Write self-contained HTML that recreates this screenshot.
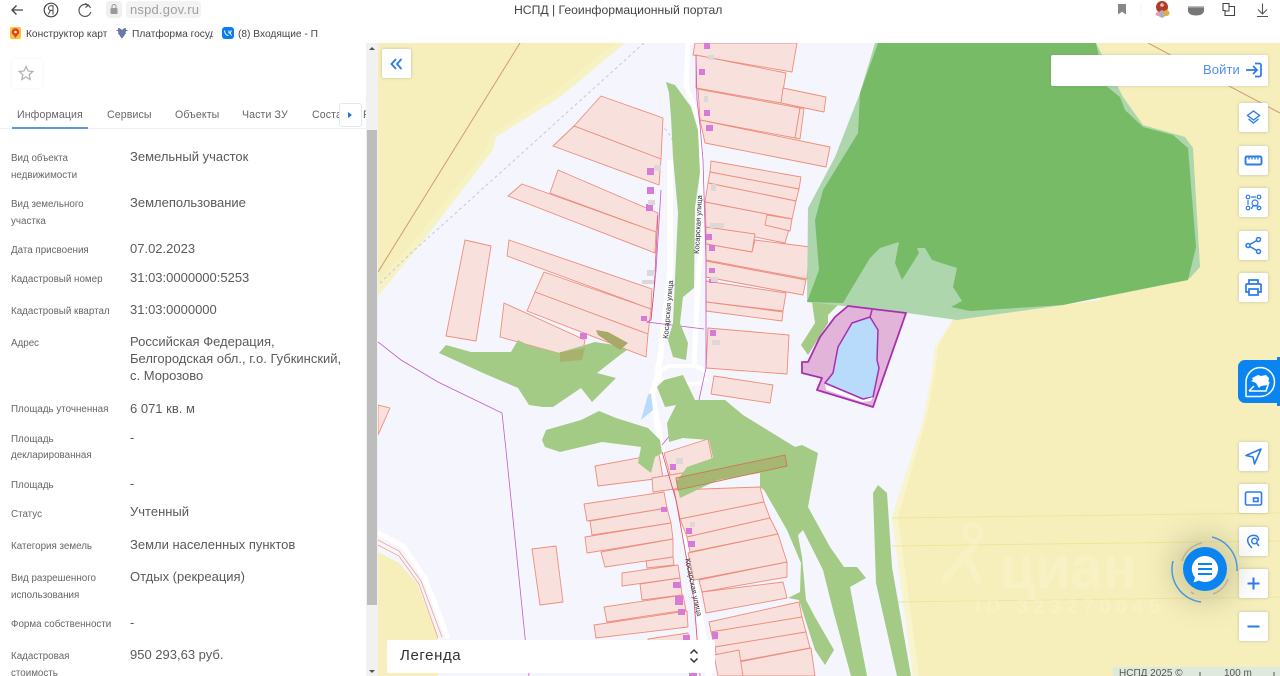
<!DOCTYPE html>
<html lang="ru"><head><meta charset="utf-8"><title>НСПД | Геоинформационный портал</title>
<style>
html,body{margin:0;padding:0;width:1280px;height:676px;overflow:hidden;background:#fff}
body{font-family:"Liberation Sans","Noto Sans CJK SC",sans-serif;position:relative}
#r{position:absolute;left:0;top:0;width:1280px;height:676px;overflow:hidden;filter:blur(.35px)}
.a{position:absolute;white-space:nowrap}
.l{position:absolute;left:11px;margin-top:2px;font-size:9.800px;line-height:12px;color:#666;white-space:nowrap}
.v{position:absolute;left:130px;margin-top:1px;font-size:13px;line-height:16px;color:#5a5a5a;white-space:nowrap;letter-spacing:0}
.t{position:absolute;top:108px;font-size:10.600px;line-height:14px;color:#666;white-space:nowrap;letter-spacing:.1px}
.b{position:absolute;left:1239px;width:29px;height:29px;background:#fff;border-radius:2px;box-shadow:0 0 3px rgba(90,110,130,.35)}
.b svg{position:absolute;left:5px;top:5px}
.bm{position:absolute;top:28px;font-size:10.200px;line-height:13px;color:#444;white-space:nowrap;overflow:hidden}
</style></head><body><div id="r">

<!-- browser chrome -->
<svg class="a" style="left:0;top:0" width="1280" height="43" fill="none">
<path d="M23 10H12M16.500 5.500L12 10l4.500 4.500" stroke="#444" stroke-width="1.300"/>
<circle cx="51" cy="10" r="6.800" stroke="#444" stroke-width="1.200"/>
<path d="M53 14.500V5.800h-2c-1.500 0-2.500 1-2.500 2.300s1 2.300 2.500 2.300h2M50.500 10.400l-2.200 4" stroke="#444" stroke-width="1"/>
<path d="M90.500 8a6 6 0 1 0 .3 4" stroke="#555" stroke-width="1.200"/><path d="M85 3.500l3.500 1.500L85.500 7.500" stroke="#555" stroke-width="1.200"/>
<rect x="106" y="1" width="16" height="17" rx="4" fill="#f0f0f0"/><rect x="110.500" y="8" width="7" height="6" rx="1" fill="#999"/><path d="M112 8V6.500a2 2 0 0 1 4 0V8" stroke="#999"/>
<rect x="126" y="1" width="75" height="17" rx="4" fill="#f3f3f3"/>
<path d="M1118 4h8v10.500l-4-2.800-4 2.800z" fill="#888"/>
<line x1="1141" y1="4" x2="1141" y2="16" stroke="#f4f4f4"/>
<circle cx="1162" cy="7" r="6" fill="#b23a2a"/><circle cx="1162" cy="5" r="1.800" fill="#e8c8a0"/><path d="M1155 14l7-4 7 4-7 4z" fill="#b4a8c8"/><circle cx="1166.500" cy="13" r="3" fill="#d8b040"/><circle cx="1158" cy="14" r="2" fill="#e0a0b0"/>
<path d="M1188 7.500h16v3c0 3-3 5-8 5s-8-2-8-5z" fill="#777"/><path d="M1188 6h16v1.500h-16z" fill="#bbb"/>
<path d="M1223 3.500h6v3h5.500v9H1225v-5h-2z" stroke="#444" stroke-width="1.100"/><path d="M1229 6.500v4.500h-4" stroke="#444"/>
<path d="M1262.500 3.500v10M1258 9.500l4.500 4.500 4.500-4.500M1257 16.500h11" stroke="#555" stroke-width="1.100"/>
<rect x="10" y="27" width="11" height="12" rx="2" fill="#f8c52c"/><circle cx="15.500" cy="32" r="3.800" fill="#e8392a"/><path d="M13 34l2.500 4 2.500-4z" fill="#e8392a"/><circle cx="15.500" cy="32" r="1.300" fill="#fff"/>
<path d="M118 28c2 0 3 1 4 2 1-1 2-2 4-2v1c0 3-.5 6-4 9.500-3.500-3.500-4-6.500-4-9.500z" fill="#6a78a8"/><path d="M116.500 30.500h2M125.500 30.500h2M118 33.500h1.500M124.500 33.500h1.500" stroke="#6a78a8"/>
<rect x="222" y="27" width="12" height="12" rx="3" fill="#0c7cf0"/><path d="M224.500 30.500c.3 3 1.500 5 4 5M229 30.500v2.500c1.200 0 2-1 2.300-2.500M229 33c1.200 0 2 1 2.500 2.500" stroke="#fff" stroke-width="1"/>
</svg>
<div class="a" style="left:130px;top:2px;font-size:13px;line-height:16px;color:#a0a0a0;letter-spacing:.2px">nspd.gov.ru</div>
<div class="a" style="left:514px;top:3px;font-size:12.200px;line-height:15px;color:#444">НСПД | Геоинформационный портал</div>
<div class="bm" style="left:26px;width:81px">Конструктор карт</div>
<div class="bm" style="left:132px;width:81px">Платформа госуд</div>
<div class="bm" style="left:238px;width:80px">(8) Входящие - По</div>

<!-- left panel -->
<div class="a" style="left:12px;top:59px;width:30px;height:29px;background:#fff;border-radius:3px;box-shadow:0 0 4px rgba(0,0,0,.06)"></div>
<svg class="a" style="left:18px;top:65px" width="16" height="16" fill="none"><path d="M8 1.500l2 4.500 4.800.5-3.600 3.200 1 4.800L8 12l-4.200 2.500 1-4.800L1.200 6.500 6 6z" stroke="#b0b0b0" stroke-width="1.200"/></svg>
<div class="t" style="left:17px">Информация</div>
<div class="t" style="left:107px">Сервисы</div>
<div class="t" style="left:175px">Объекты</div>
<div class="t" style="left:242px">Части ЗУ</div>
<div class="t" style="left:312px;width:28px;overflow:hidden">Состав</div>
<div class="t" style="left:363px;width:3px;overflow:hidden">Р</div>
<div class="a" style="left:0;top:128px;width:366px;height:1px;background:#f0f0f0"></div>
<div class="a" style="left:12px;top:127px;width:76px;height:2px;background:#5a9ad8"></div>
<div class="a" style="left:339px;top:103px;width:23px;height:24px;background:#fff;border:1px solid #e0e8f4;box-sizing:border-box;border-radius:3px"></div>
<svg class="a" style="left:347px;top:111px" width="6" height="8"><path d="M1 1l4 3-4 3z" fill="#1f74d8"/></svg>

<div class="l" style="top:151px">Вид объекта</div><div class="l" style="top:168px">недвижимости</div>
<div class="l" style="top:197px">Вид земельного</div><div class="l" style="top:214px">участка</div>
<div class="l" style="top:243px">Дата присвоения</div>
<div class="l" style="top:272px">Кадастровый номер</div>
<div class="l" style="top:304px">Кадастровый квартал</div>
<div class="l" style="top:336px">Адрес</div>
<div class="l" style="top:402px">Площадь уточненная</div>
<div class="l" style="top:432px">Площадь</div><div class="l" style="top:448px">декларированная</div>
<div class="l" style="top:478px">Площадь</div>
<div class="l" style="top:507px">Статус</div>
<div class="l" style="top:539px">Категория земель</div>
<div class="l" style="top:571px">Вид разрешенного</div><div class="l" style="top:588px">использования</div>
<div class="l" style="top:617px">Форма собственности</div>
<div class="l" style="top:649px">Кадастровая</div><div class="l" style="top:666px">стоимость</div>

<div class="v" style="top:148px">Земельный участок</div>
<div class="v" style="top:194px">Землепользование</div>
<div class="v" style="top:240px">07.02.2023</div>
<div class="v" style="top:269px">31:03:0000000:5253</div>
<div class="v" style="top:301px">31:03:0000000</div>
<div class="v" style="top:333px">Российская Федерация,</div>
<div class="v" style="top:350px">Белгородская обл., г.о. Губкинский,</div>
<div class="v" style="top:367px">с. Морозово</div>
<div class="v" style="top:400px">6 071 кв. м</div>
<div class="v" style="top:429px">-</div>
<div class="v" style="top:475px">-</div>
<div class="v" style="top:503px">Учтенный</div>
<div class="v" style="top:536px">Земли населенных пунктов</div>
<div class="v" style="top:568px">Отдых (рекреация)</div>
<div class="v" style="top:614px">-</div>
<div class="v" style="top:646px">950 293,63 руб.</div>

<!-- scrollbar -->
<div class="a" style="left:366px;top:43px;width:12px;height:633px;background:#f1f1f1"></div>
<div class="a" style="left:367px;top:130px;width:10px;height:475px;background:#bdbdbd"></div>
<svg class="a" style="left:366px;top:43px" width="12" height="633"><path d="M3 7l3-3 3 3z" fill="#555"/><path d="M3 627l3 3 3-3z" fill="#555"/></svg>

<!-- map -->
<svg class="a" style="left:378px;top:43px" width="902" height="633" viewBox="378 43 902 633">
<rect x="378" y="43" width="902" height="633" fill="#f5f5fd"/>
<polygon points="378,43 625,43 560,97 496,137 493,150 420,245 378,296" fill="#f7f2c4"/>
<polygon points="378,43 615,43 555,92 490,135 487,148 411,245 378,282" fill="#f6efbb"/>
<polygon points="1090,43 1280,43 1280,676 913,676 892,517 923,420 932,373 935,347 953,320 1100,300" fill="#f6efbb"/>
<polygon points="953,320 938,347 935,373 926,420 898,517 919,676 913,676 892,517 923,420 932,373 935,347" fill="#f8f4cc"/>
<path d="M378 552l21 11 18 20 21 55v38h-60z" fill="#f6efbb"/>
<path d="M378 533l25 13 22 32 23 60" fill="none" stroke="#fff" stroke-width="5"/>
<path d="M378 540l21 11 22 30 21 56M378 545l21 11 20 28 19 54" fill="none" stroke="#efa48f" stroke-width=".8"/>
<g stroke="#f0e49c" stroke-width="1" fill="none"><path d="M892 518L1280 513M892 546L1280 541M892 602L1280 597"/></g>
<path d="M520 43L378 272" stroke="#cf9a7c" stroke-width="1" fill="none"/>
<path d="M1148 43L1280 113" stroke="#cf9a7c" stroke-width="1" fill="none"/>
<path d="M644 43L448 220 411 253 378 285" stroke="#c4c8d4" stroke-width="1" stroke-dasharray="3 3" fill="none"/>
<path d="M590 111q50-2 75 18 8 8 10 20" stroke="#c4c8d4" stroke-width="1" stroke-dasharray="3 3" fill="none"/>
<!-- roads -->
<g fill="none" stroke="#fff" stroke-linejoin="round">
<path d="M688 43L686 85 700 125 703 210 697 300 694 365" stroke-width="5"/>
<path d="M670 160L670 273 660 360 657 372" stroke-width="6"/>
<path d="M659 372L652 393 662 450 680 500 704 640 709 676" stroke-width="6"/>
<path d="M660 371L668 366H695L706 371V378L698 384H668L660 378Z" stroke-width="4"/>
</g>
<polygon points="651,393 648,395 641,420 653,410" fill="#b8dbfb"/>
<!-- lots -->
<g fill="#f8e1dd" stroke="#ef8d7d" stroke-width=".9" stroke-linejoin="round">
<polygon points="601,96 663,118 661,159 574,126"/><polygon points="574,126 661,159 659,185 553,146"/>
<polygon points="558,170 658,213 656,232 550,193"/><polygon points="522,184 656,232 655,253 508,196"/>
<polygon points="465,240 491,246 476,341 446,336"/><polygon points="509,240 652,289 651,309 507,256"/>
<polygon points="544,272 651,309 648,334 535,292"/><polygon points="535,292 648,334 646,357 527,311"/>
<polygon points="504,303 585,340 581,360 558,353 500,337"/>
<polygon points="695,43 797,43 792,72 693,55"/><polygon points="696,55 786,73 781,103 696,88"/>
<polygon points="783,88 826,97 824,112 781,103"/><polygon points="698,89 800,108 795,138 700,120"/>
<polygon points="800,108 804,109 800,139 795,138"/><polygon points="700,120 830,147 826,167 705,143"/>
<polygon points="711,161 801,177 799,189 710,172"/><polygon points="710,172 799,189 796,201 708,183"/>
<polygon points="708,183 796,201 792,219 705,202"/><polygon points="705,202 792,219 785,243 706,227"/>
<polygon points="767,215 792,219 790,231 765,225"/><polygon points="706,227 755,234 752,252 706,244"/>
<polygon points="755,240 810,247 807,279 706,260 706,244 752,252"/><polygon points="706,261 806,280 803,295 706,277"/>
<polygon points="706,281 786,293 783,311 706,302"/><polygon points="706,302 783,312 782,321 706,311"/>
<polygon points="708,328 789,335 787,374 706,368"/><polygon points="714,376 773,385 770,403 711,394"/>
<polygon points="595,466 659,454 663,478 598,486"/><polygon points="664,453 708,439 714,468 671,478"/>
<polygon points="652,478 700,470 702,485 653,492"/>
<polygon points="584,504 664,492 667,508 587,521"/><polygon points="590,521 667,508 671,523 592,535"/>
<polygon points="585,537 671,523 673,539 587,553"/><polygon points="601,552 673,539 673,557 605,567"/>
<polygon points="646,561 673,557 674,565 647,568"/><polygon points="622,573 678,565 680,578 622,586"/>
<polygon points="640,584 680,578 682,595 642,600"/><polygon points="604,607 683,595 686,610 607,622"/>
<polygon points="594,625 687,611 688,627 596,638"/><polygon points="648,639 688,633 691,660 650,660"/>
<polygon points="674,490 760,487 764,502 680,519"/><polygon points="680,519 764,502 770,518 687,537"/>
<polygon points="687,537 770,518 778,534 690,552"/><polygon points="688,553 778,534 787,562 694,580"/>
<polygon points="699,580 787,562 787,577 702,592"/><polygon points="702,592 783,582 787,598 706,613"/>
<polygon points="709,622 799,602 802,617 711,632"/><polygon points="711,632 802,617 806,632 715,647"/>
<polygon points="715,647 806,632 810,648 718,665"/><polygon points="739,662 811,648 815,676 743,676"/>
<polygon points="532,549 556,546 563,602 540,605"/><polygon points="378,405 390,408 378,435"/>
<polygon points="714,655 739,650 743,676 718,676"/>
</g>
<!-- magenta lines -->
<g fill="none" stroke="#c45ac8" stroke-width=".8">
<path d="M378 342L401 360 438 382 502 413 506 450 525 637 529 676"/>
<path d="M696 55L697 100 700 125 703 160 706 260 706 330 706 368 699 400 662 445"/>
<path d="M661 190L656 270 651 320 647 322 704 329"/>
</g>
<path d="M662 452L676 500 694 600 700 676" fill="none" stroke="#d84a6c" stroke-width=".8"/>
<path d="M658 215L654 290 651 320" fill="none" stroke="#d84a6c" stroke-width=".7"/>
<!-- vegetation -->
<g fill="#a3cb85">
<polygon points="666,82 675,85 691,107 698,130 700,173 695,207 694,288 683,297 680,323 688,343 686,360 673,357 668,340 673,323 678,213 673,157 671,117 669,93"/>
<polygon points="439,353 446,345 471,352 511,352 518,340 528,345 558,353 595,342 615,345 627,350 620,355 597,373 616,378 592,402 581,388 553,407 543,407 529,405 518,388 483,373"/>
<polygon points="542,440 546,430 581,420 599,411 616,418 648,428 660,440 662,453 655,457 651,473 638,463 641,447 602,442 560,452 545,447"/>
<polygon points="657,387 664,380 683,375 695,400 725,400 743,415 795,447 802,445 818,453 808,507 830,547 844,567 857,567 866,578 850,587 867,676 851,676 833,610 823,570 803,530 798,535 802,557 806,600 815,617 834,650 825,665 815,650 799,600 788,598 800,592 801,563 787,530 764,490 760,487 760,473 718,480 680,498 676,482 687,467 713,458 709,440 683,438 669,442 667,423 676,405 665,407"/>
<polygon points="873,493 878,485 887,493 892,567 911,676 897,676 876,583"/>
<polygon points="812,302 838,305 828,315 828,323 808,355 801,345 815,323"/>
</g>
<polygon points="676,478 785,455 787,466 678,490" fill="#b87840" fill-opacity=".25" stroke="#cc7a50" stroke-width=".9"/>
<polygon points="560,352 585,348 582,360 560,362" fill="#b87840" fill-opacity=".3"/>
<polygon points="596,330 608,332 628,343 620,350 598,335" fill="#a8a868"/>
<!-- forest -->
<polygon points="875,43 1096,43 1123,97 1143,125 1185,137 1193,148 1200,267 1190,278 1063,305 957,320 907,313 807,302 808,208 835,157 860,93" fill="#add6ad"/>
<polygon points="878,43 1096,43 1105,85 1120,97 1125,110 1143,127 1173,135 1188,148 1196,247 1188,280 1063,305 970,311 951,307 962,301 953,287 957,268 932,260 925,248 917,248 919,253 902,280 895,263 899,242 880,248 870,258 843,303 807,302 819,270 815,220 823,190 858,133 860,93" fill="#78bb66"/>
<!-- parcel -->
<polygon points="848,306 906,313 873,407 817,390 822,378 802,373 802,362 808,362 820,337 835,317" fill="#e2b4da" stroke="#a82fb0" stroke-width="1.800" stroke-linejoin="round"/>
<polygon points="870,317 878,330 877,360 879,368 873,397 863,399 825,383 833,373 838,347 852,323" fill="#b8dbfb" stroke="#a82fb0" stroke-width="1.500" stroke-linejoin="round"/>
<polygon points="825,384 863,400 873,397 871,401 862,402 826,390" fill="#fff"/>
<path d="M870 317l2-7" stroke="#a82fb0" stroke-width="1.500"/>
<!-- buildings -->
<g fill="#d87ad8">
<rect x="647" y="168" width="7" height="7"/><rect x="647" y="187" width="7" height="7"/><rect x="646" y="204" width="7" height="7"/>
<rect x="704" y="43" width="6" height="6"/><rect x="699" y="69" width="6" height="6"/><rect x="704" y="110" width="6" height="6"/><rect x="706" y="125" width="7" height="6"/>
<rect x="706" y="234" width="6" height="6"/><rect x="709" y="245" width="6" height="6"/><rect x="709" y="268" width="6" height="5"/><rect x="709" y="279" width="7" height="4"/>
<rect x="641" y="316" width="6" height="5"/><rect x="580" y="333" width="7" height="6"/><rect x="710" y="330" width="6" height="6"/>
<rect x="670" y="464" width="6" height="6"/><rect x="661" y="507" width="6" height="5"/><rect x="686" y="528" width="6" height="6"/><rect x="688" y="541" width="7" height="6"/>
<rect x="673" y="582" width="8" height="6"/><rect x="675" y="596" width="8" height="9"/><rect x="678" y="609" width="7" height="6"/><rect x="683" y="635" width="7" height="6"/><rect x="712" y="632" width="6" height="7"/><rect x="689" y="670" width="8" height="6"/>
</g>
<g fill="#dcd8d8">
<rect x="654" y="165" width="7" height="6"/><rect x="648" y="200" width="7" height="5"/><rect x="647" y="270" width="8" height="6"/><rect x="642" y="280" width="12" height="4"/>
<rect x="708" y="55" width="6" height="5"/><rect x="704" y="96" width="4" height="6"/><rect x="711" y="184" width="5" height="7"/><rect x="710" y="223" width="14" height="5"/><rect x="711" y="277" width="7" height="5"/><rect x="712" y="340" width="8" height="5"/>
<rect x="676" y="458" width="7" height="6"/><rect x="690" y="522" width="5" height="5"/>
</g>
<g font-family="Liberation Sans,sans-serif" font-size="7.500" fill="#333">
<text transform="translate(668,339) rotate(-85)">Косарская улица</text>
<text transform="translate(699,254) rotate(-87)">Косарская улица</text>
<text transform="translate(685,559) rotate(78)">Косарская улица</text>
</g>
<!-- watermark -->
<g fill="#f9f5d0" opacity=".45">
<text x="1000" y="588" font-family="Liberation Sans,sans-serif" font-size="60" font-weight="bold" textLength="137" lengthAdjust="spacingAndGlyphs">циан</text>
<text x="975" y="613" font-family="Liberation Sans,sans-serif" font-size="20" font-weight="bold" textLength="185">ID 323270045</text>
<path d="M943 582l22-27 15 28M977 543l-12 13" fill="none" stroke="#f9f5d0" stroke-width="7"/>
<circle cx="973" cy="533" r="8" fill="none" stroke="#f9f5d0" stroke-width="5"/>
</g>
<!-- scale -->
<rect x="1113" y="667" width="167" height="9" fill="#dfe9dd"/>
<text x="1119" y="676" font-family="Liberation Sans,sans-serif" font-size="10" fill="#555">НСПД 2025 ©</text>
<text x="1224" y="676" font-family="Liberation Sans,sans-serif" font-size="10" fill="#555">100 m</text>
<path d="M1200 672v4M1274 672v4" stroke="#555"/>
</svg>

<!-- map controls -->
<div class="a" style="left:382px;top:49px;width:29px;height:29px;background:#fff;border-radius:2px;box-shadow:0 0 3px rgba(90,110,130,.35)"></div>
<svg class="a" style="left:390px;top:58px" width="13" height="12" fill="none" stroke="#2b7be8" stroke-width="1.800"><path d="M6 1L1.500 6 6 11M11.500 1L7 6l4.500 5"/></svg>

<div class="a" style="left:1051px;top:55px;width:217px;height:31px;background:#fff;border-radius:2px;box-shadow:0 0 3px rgba(90,110,130,.25)"></div>
<div class="a" style="left:1203px;top:62px;font-size:13px;line-height:16px;color:#4f8ff0;letter-spacing:.1px">Войти</div>
<svg class="a" style="left:1245px;top:61px" width="18" height="18" fill="none" stroke="#2b7be8" stroke-width="1.700"><path d="M1 9h11M8 5l4 4-4 4M10 2.500h4.500a1.500 1.500 0 0 1 1.500 1.500v10a1.500 1.500 0 0 1-1.500 1.500H10"/></svg>

<div class="b" style="top:103px"><svg width="19" height="19" fill="none" stroke="#2b7be8" stroke-width="1.400"><path d="M9.500 3l6 4.500-6 4.500-6-4.500zM4.500 11l5 4 5-4"/></svg></div>
<div class="b" style="top:146px"><svg width="19" height="19" fill="none" stroke="#2b7be8" stroke-width="1.900"><rect x="1.500" y="5.500" width="16" height="8" rx="1.500"/><path d="M5 5v3.500M8 5v3.500M11 5v3.500M14 5v3.500" stroke-width="1.300"/></svg></div>
<div class="b" style="top:188px"><svg width="19" height="19" fill="none" stroke="#2b7be8" stroke-width="1.200"><circle cx="4" cy="4" r="1.800"/><circle cx="15" cy="4" r="1.800"/><circle cx="4" cy="15" r="1.800"/><circle cx="15" cy="15" r="1.800"/><path d="M7 4h5M4 7v5M7 15h1"/><circle cx="11" cy="10" r="3"/><path d="M7.500 16c.5-2.500 2-3.500 3.500-3.500s3 1 3.500 2"/></svg></div>
<div class="b" style="top:231px"><svg width="19" height="19" fill="none" stroke="#2b7be8" stroke-width="1.500"><circle cx="4" cy="9.500" r="2"/><circle cx="14.500" cy="3.500" r="2"/><circle cx="14.500" cy="15.500" r="2"/><path d="M5.800 8.500l7-4M5.800 10.500l7 4"/></svg></div>
<div class="b" style="top:273px"><svg width="19" height="19" fill="none" stroke="#2b7be8" stroke-width="1.700"><path d="M5 6V2h9v4M5 14H2V7a1 1 0 0 1 1-1h13a1 1 0 0 1 1 1v7h-3"/><rect x="5" y="11" width="9" height="6"/></svg></div>

<div class="a" style="left:1277px;top:357px;width:3px;height:49px;background:#0a84f0"></div>
<div class="a" style="left:1238px;top:360px;width:42px;height:43px;background:#0a84f0;border-radius:7px 0 0 7px"></div>
<svg class="a" style="left:1243px;top:365px" width="33" height="33" fill="none" stroke="#fff" stroke-width="1.500"><path d="M17 2.500a14.500 14.500 0 1 1 0 29H3V17A14.500 14.500 0 0 1 17 2.500z"/><path d="M9 13l6-3 3 1 5-1 3 3-1 7-7 1-2 2-3-5-5-2 2-1z" fill="#fff" stroke="none"/><path d="M6 26l5-5M6 26h17l3-9"/></svg>

<div class="b" style="top:442px"><svg width="19" height="19" fill="none" stroke="#2b7be8" stroke-width="1.600"><path d="M17 2L2 8.500l7 1.500 1.500 7z" stroke-linejoin="round"/></svg></div>
<div class="b" style="top:484px"><svg width="19" height="19" fill="none" stroke="#2b7be8" stroke-width="1.600"><rect x="1.500" y="3" width="16" height="13" rx="1.500"/><rect x="9.500" y="9" width="4.500" height="3.500"/></svg></div>
<div class="b" style="top:527px"><svg width="19" height="19" fill="none" stroke="#2b7be8" stroke-width="1.400"><path d="M8 16C4 12 3 9 4 6.500 5 4 8 3 11 3.500s4 3 3.500 5"/><circle cx="10.500" cy="9" r="2.800"/><path d="M12.500 11l2.500 3"/></svg></div>
<div class="b" style="top:569px"><svg width="19" height="19" fill="none" stroke="#2b7be8" stroke-width="2"><path d="M9.500 3.500v12M3.500 9.500h12"/></svg></div>
<div class="b" style="top:612px"><svg width="19" height="19" fill="none" stroke="#2b7be8" stroke-width="2"><path d="M3.500 9.500h12"/></svg></div>

<div class="a" style="left:387px;top:640px;width:328px;height:33px;background:#fff;border-radius:2px"></div>
<div class="a" style="left:400px;top:647px;font-size:15px;line-height:18px;color:#333;letter-spacing:.6px">Легенда</div>
<svg class="a" style="left:689px;top:648px" width="10" height="16" fill="none" stroke="#333" stroke-width="1.500"><path d="M1.500 5.500L5 2l3.500 3.500M1.500 10.500L5 14l3.500-3.500"/></svg>

<!-- chat -->
<div class="a" style="left:1183px;top:547px;width:44px;height:44px;border-radius:50%;box-shadow:0 0 30px 10px rgba(90,90,70,.28)"></div>
<svg class="a" style="left:1165px;top:530px" width="80" height="80" fill="none" stroke-width="1.300">
<circle cx="40" cy="39" r="22" fill="#0a84f0"/>
<path d="M17 31a26 26 0 0 1 20-18M63 49a25 25 0 0 1-15 15M26 62l3 2" stroke="#b9b39a" stroke-width="1.500"/>
<path d="M47 7a33 33 0 0 1 25 34M36 72A33 33 0 0 1 8 31" stroke="#4a9ad8" stroke-width="1.500"/>
<path d="M40 26a13 13 0 1 1-6 24.500l-5.500 2 1.500-5A13 13 0 0 1 40 26z" fill="#fff"/>
<path d="M33 34h14M33 39h14M33 44h14" stroke="#0a84f0" stroke-width="2"/>
</svg>
</div></body></html>
